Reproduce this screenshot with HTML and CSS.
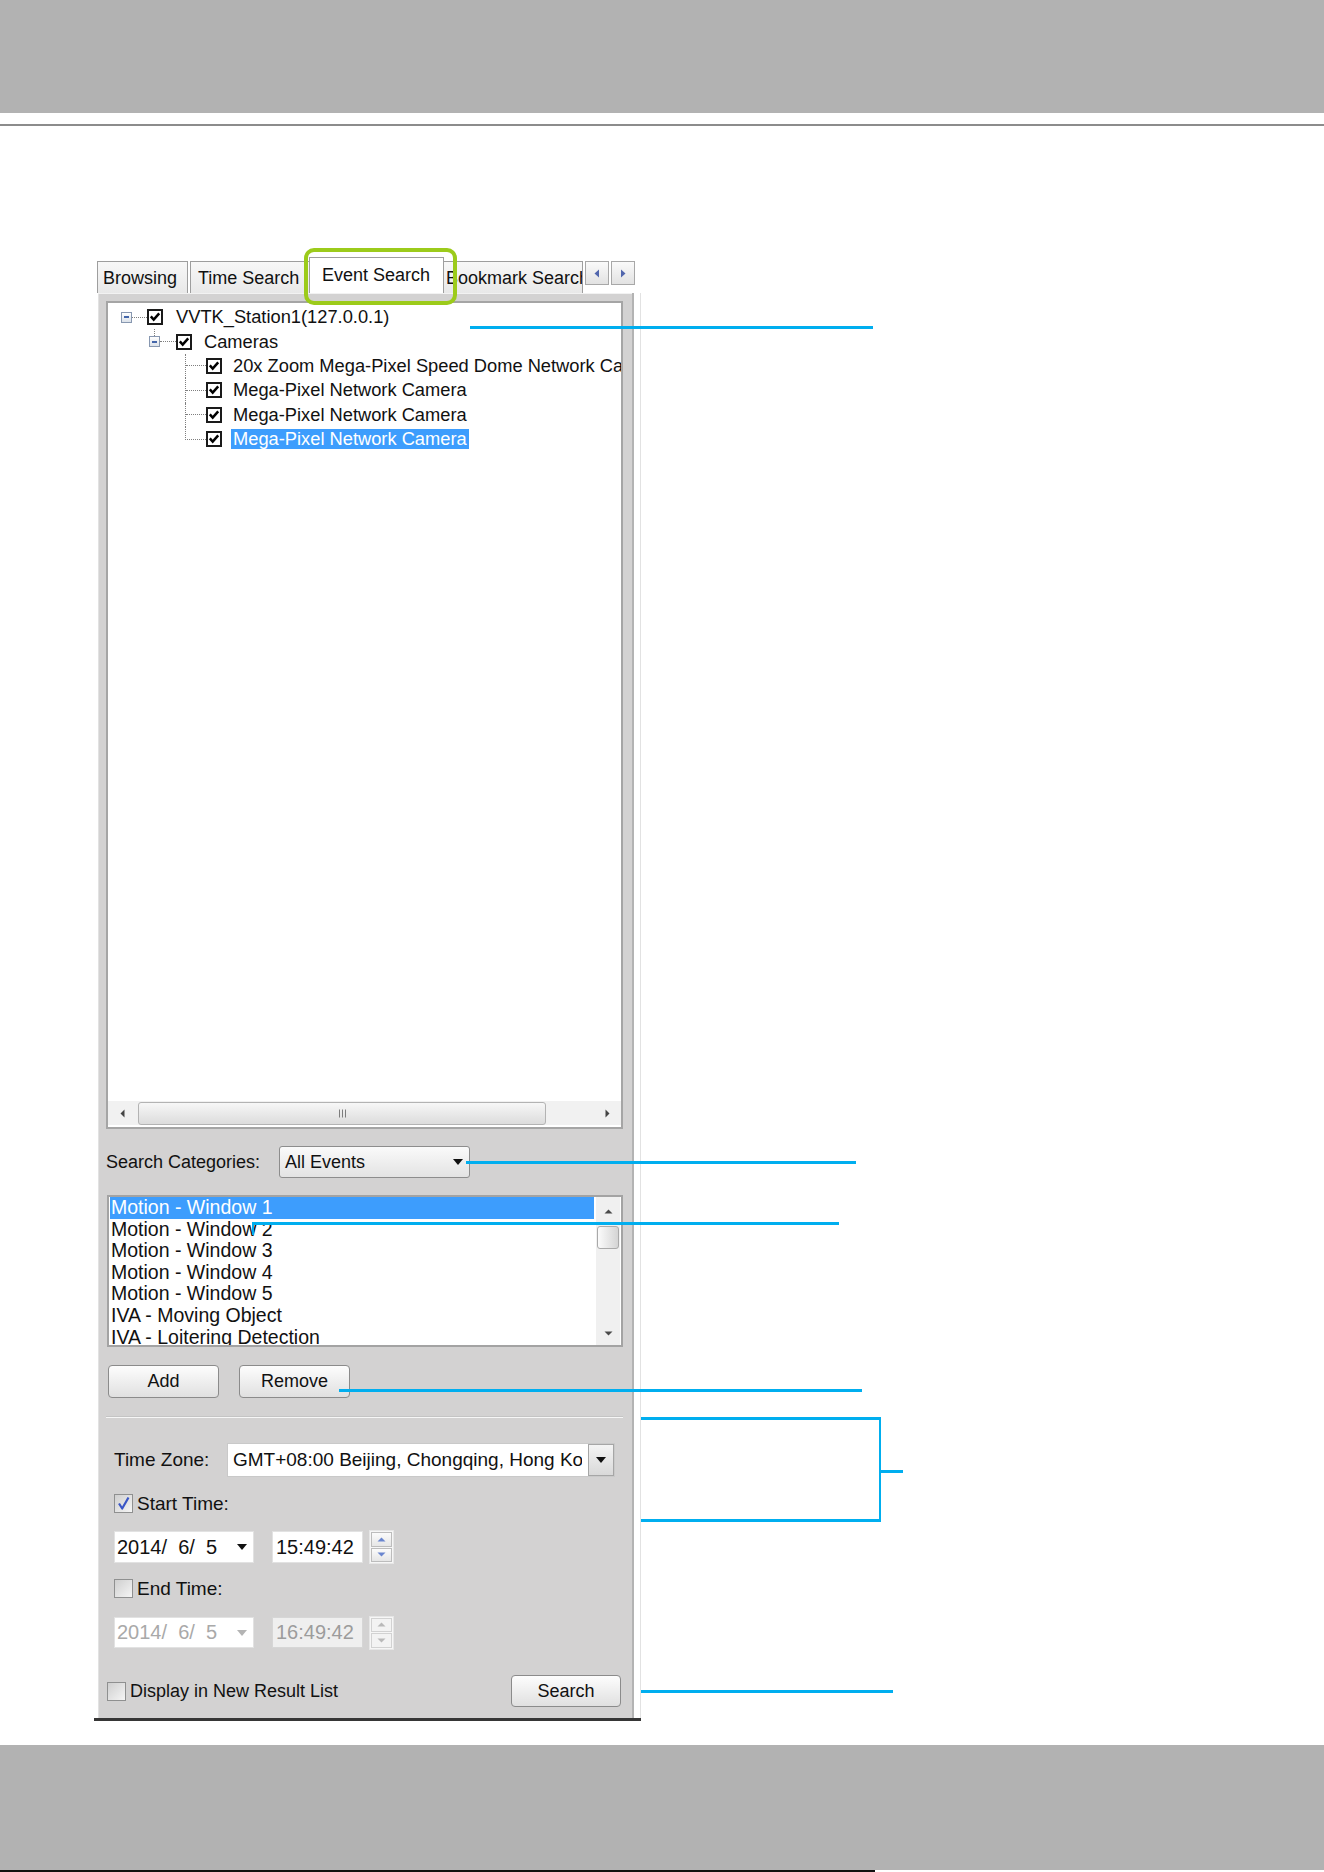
FILE: index.html
```html
<!DOCTYPE html>
<html lang="en">
<head>
<meta charset="utf-8">
<title>Event Search</title>
<link rel="stylesheet" href="styles.css">
</head>
<body>
<div class="page-head"></div>
<div class="page-rule"></div>

<main class="stage">
  <section class="panel">
    <div class="tabstrip">
      <div class="tab tab-browse">Browsing</div>
      <div class="tab tab-time">Time Search</div>
      <div class="tab tab-active">Event Search</div>
      <div class="tab tab-bookmark"><span>Bookmark Search</span></div>
      <div class="tab-nav">
        <div class="nav-btn"><svg width="6" height="9" viewBox="0 0 6 9"><path d="M5 0.5 L0.5 4.5 L5 8.5 Z" fill="#5166ad"/></svg></div>
        <div class="nav-btn"><svg width="6" height="9" viewBox="0 0 6 9"><path d="M1 0.5 L5.5 4.5 L1 8.5 Z" fill="#5166ad"/></svg></div>
      </div>
    </div>

    <div class="frame">
      <div class="body">
        <!-- device tree -->
        <div class="tree">
          <div class="tree-view">
            <div class="node lvl0">
              <div class="node-col"><span class="stub"></span><span class="exp"><i></i></span><span class="stub"></span></div>
              <span class="hdots"></span>
              <svg class="tcb" width="16" height="16" viewBox="0 0 16 16"><rect x="1" y="1" width="14" height="14" fill="#fff" stroke="#1a1a1a" stroke-width="2"/><path d="M3.8 7.4 L6.7 10.6 L12.2 4.4" fill="none" stroke="#000" stroke-width="2.5"/></svg>
              <span class="node-label">VVTK_Station1(127.0.0.1)</span>
            </div>
            <div class="node lvl1">
              <div class="node-col"><span class="stub up"></span><span class="exp"><i></i></span><span class="stub"></span></div>
              <span class="hdots"></span>
              <svg class="tcb" width="16" height="16" viewBox="0 0 16 16"><rect x="1" y="1" width="14" height="14" fill="#fff" stroke="#1a1a1a" stroke-width="2"/><path d="M3.8 7.4 L6.7 10.6 L12.2 4.4" fill="none" stroke="#000" stroke-width="2.5"/></svg>
              <span class="node-label">Cameras</span>
            </div>
            <div class="node lvl2">
              <span class="branch"></span>
              <svg class="tcb" width="16" height="16" viewBox="0 0 16 16"><rect x="1" y="1" width="14" height="14" fill="#fff" stroke="#1a1a1a" stroke-width="2"/><path d="M3.8 7.4 L6.7 10.6 L12.2 4.4" fill="none" stroke="#000" stroke-width="2.5"/></svg>
              <span class="node-label">20x Zoom Mega-Pixel Speed Dome Network Camera</span>
            </div>
            <div class="node lvl2">
              <span class="branch"></span>
              <svg class="tcb" width="16" height="16" viewBox="0 0 16 16"><rect x="1" y="1" width="14" height="14" fill="#fff" stroke="#1a1a1a" stroke-width="2"/><path d="M3.8 7.4 L6.7 10.6 L12.2 4.4" fill="none" stroke="#000" stroke-width="2.5"/></svg>
              <span class="node-label">Mega-Pixel Network Camera</span>
            </div>
            <div class="node lvl2">
              <span class="branch"></span>
              <svg class="tcb" width="16" height="16" viewBox="0 0 16 16"><rect x="1" y="1" width="14" height="14" fill="#fff" stroke="#1a1a1a" stroke-width="2"/><path d="M3.8 7.4 L6.7 10.6 L12.2 4.4" fill="none" stroke="#000" stroke-width="2.5"/></svg>
              <span class="node-label">Mega-Pixel Network Camera</span>
            </div>
            <div class="node lvl2">
              <span class="branch end"></span>
              <svg class="tcb" width="16" height="16" viewBox="0 0 16 16"><rect x="1" y="1" width="14" height="14" fill="#fff" stroke="#1a1a1a" stroke-width="2"/><path d="M3.8 7.4 L6.7 10.6 L12.2 4.4" fill="none" stroke="#000" stroke-width="2.5"/></svg>
              <span class="node-label selected">Mega-Pixel Network Camera</span>
            </div>
          </div>
          <div class="hscroll">
            <div class="sb-arrow h-left"><svg width="5" height="9" viewBox="0 0 5 9"><path d="M4.5 0.5 L0.5 4.5 L4.5 8.5 Z" fill="#444"/></svg></div>
            <div class="h-thumb"><svg width="9" height="9" viewBox="0 0 9 9"><path d="M1.5 0.5V8.5M4.5 0.5V8.5M7.5 0.5V8.5" stroke="#7d7d7d" stroke-width="1"/></svg></div>
            <div class="sb-fill"></div>
            <div class="sb-arrow h-right"><svg width="5" height="9" viewBox="0 0 5 9"><path d="M0.5 0.5 L4.5 4.5 L0.5 8.5 Z" fill="#444"/></svg></div>
          </div>
        </div>

        <!-- category picker -->
        <div class="cat-row">
          <span class="cat-label">Search Categories:</span>
          <div class="select">
            <span>All Events</span>
            <svg width="10" height="6" viewBox="0 0 10 6"><path d="M0 0H10L5 6Z" fill="#111"/></svg>
          </div>
        </div>

        <div class="list">
          <div class="list-items">
            <div class="li sel">Motion - Window 1</div>
            <div class="li">Motion - Window 2</div>
            <div class="li">Motion - Window 3</div>
            <div class="li">Motion - Window 4</div>
            <div class="li">Motion - Window 5</div>
            <div class="li">IVA - Moving Object</div>
            <div class="li">IVA - Loitering Detection</div>
          </div>
          <div class="vscroll">
            <div class="sb-arrow v-up"><svg width="9" height="5" viewBox="0 0 9 5"><path d="M0.5 4.5H8.5L4.5 0.5Z" fill="#4a4a4a"/></svg></div>
            <div class="v-thumb"></div>
            <div class="sb-fill"></div>
            <div class="sb-arrow v-down"><svg width="9" height="5" viewBox="0 0 9 5"><path d="M0.5 0.5H8.5L4.5 4.5Z" fill="#4a4a4a"/></svg></div>
          </div>
        </div>

        <div class="btn-row">
          <div class="btn">Add</div>
          <div class="btn">Remove</div>
        </div>

        <div class="sep"></div>

        <!-- time range -->
        <div class="tz-row">
          <span class="tz-label">Time Zone:</span>
          <div class="combo">
            <span class="combo-text">GMT+08:00 Beijing, Chongqing, Hong Kong, Urumqi</span>
            <div class="combo-btn"><svg width="10" height="6" viewBox="0 0 10 6"><path d="M0 0H10L5 6Z" fill="#111"/></svg></div>
          </div>
        </div>

        <div class="check-row start-check">
          <span class="chk"><svg width="17" height="17" viewBox="0 0 17 17"><path d="M4 8.5 L7.2 13.5 L13.5 2.5" fill="none" stroke="#3a56c6" stroke-width="2.2" stroke-linejoin="round"/></svg></span>
          <span class="chk-label">Start Time:</span>
        </div>

        <div class="dt-row start-dt">
          <div class="date"><span>2014/  6/  5</span><svg width="10" height="6" viewBox="0 0 10 6"><path d="M0 0H10L5 6Z" fill="#111"/></svg></div>
          <div class="time">15:49:42</div>
          <div class="spin">
            <div class="spin-btn"><svg width="9" height="5" viewBox="0 0 9 5"><path d="M0.5 4.5H8.5L4.5 0.5Z" fill="#6a86cf"/></svg></div>
            <div class="spin-btn"><svg width="9" height="5" viewBox="0 0 9 5"><path d="M0.5 0.5H8.5L4.5 4.5Z" fill="#6a86cf"/></svg></div>
          </div>
        </div>

        <div class="check-row end-check">
          <span class="chk"></span>
          <span class="chk-label">End Time:</span>
        </div>

        <div class="dt-row end-dt">
          <div class="date off"><span>2014/  6/  5</span><svg width="10" height="6" viewBox="0 0 10 6"><path d="M0 0H10L5 6Z" fill="#b4b4b4"/></svg></div>
          <div class="time off">16:49:42</div>
          <div class="spin off">
            <div class="spin-btn"><svg width="9" height="5" viewBox="0 0 9 5"><path d="M0.5 4.5H8.5L4.5 0.5Z" fill="#b9b9b9"/></svg></div>
            <div class="spin-btn"><svg width="9" height="5" viewBox="0 0 9 5"><path d="M0.5 0.5H8.5L4.5 4.5Z" fill="#b9b9b9"/></svg></div>
          </div>
        </div>

        <div class="bottom-row">
          <span class="chk"></span>
          <span class="chk-label">Display in New Result List</span>
          <div class="btn search-btn">Search</div>
        </div>
      </div>
      <div class="edge"></div>
    </div>
    <div class="panel-base"></div>
  </section>

  <!-- callout lines drawn over the screenshot -->
  <div class="focus-ring"></div>
  <div class="mk mk-tree"></div>
  <div class="mk mk-cat"></div>
  <div class="mk mk-list"></div>
  <div class="mk mk-list-tick"></div>
  <div class="mk mk-remove"></div>
  <div class="mk mk-brace-top"></div>
  <div class="mk mk-brace-side"></div>
  <div class="mk mk-brace-bot"></div>
  <div class="mk mk-brace-tick"></div>
  <div class="mk mk-search"></div>
</main>

<div class="page-foot"></div>
<div class="foot-line"></div>
</body>
</html>
```

FILE: styles.css
```css
* { box-sizing: border-box; }

html, body { margin: 0; padding: 0; }

body {
  width: 1324px;
  height: 1872px;
  overflow: hidden;
  background: #fff;
  font-family: "Liberation Sans", Arial, sans-serif;
  font-size: 18px;
  color: #111;
}

/* page chrome */
.page-head { height: 113px; background: #b2b2b2; }
.page-rule { margin-top: 11px; height: 2px; background: #8c8c8c; }
.stage { position: relative; height: 1619px; padding-top: 131px; }
.page-foot { height: 125px; background: #b2b2b2; }
.foot-line { width: 875px; height: 2px; background: #111; }

/* panel */
.panel { margin-left: 95px; width: 546px; }

.tabstrip {
  display: flex;
  align-items: flex-end;
  height: 36px;
  padding-left: 2px;
}

.tab {
  flex: none;
  height: 32px;
  border: 1px solid #9e9e9e;
  border-bottom: none;
  background: linear-gradient(#f8f8f8, #e8e8e8);
  display: flex;
  align-items: center;
  white-space: nowrap;
  overflow: hidden;
  line-height: 1;
}
.tab-browse { width: 91px; padding-left: 5px; }
.tab-time { width: 123px; margin-left: 2px; padding-left: 7px; }
.tab-active {
  position: relative;
  z-index: 1;
  width: 135px;
  height: 36px;
  margin-left: -4px;
  padding-left: 12px;
  padding-bottom: 2px;
  background: #fff;
}
.tab-bookmark { width: 141px; margin-left: -2px; }
.tab-bookmark span { margin-left: 3px; }

.tab-nav {
  align-self: flex-start;
  margin-top: 4px;
  margin-left: 2px;
  display: flex;
  gap: 2px;
}
.nav-btn {
  width: 24px;
  height: 24px;
  border: 1px solid #a8a8a8;
  background: linear-gradient(#fafafa, #e2e2e2);
  display: flex;
  align-items: center;
  justify-content: center;
}

.frame { display: flex; margin-left: 3px; }

.body {
  width: 534px;
  background: #d3d2d2;
  box-shadow: inset 0 1px #f2f2f2, inset 1px 0 #e2e2e2;
  padding: 8px 9px 11px 8px;
  display: flex;
  flex-direction: column;
}

.edge {
  width: 9px;
  border-left: 2px solid #b3b3b3;
  border-right: 1px solid #e2e2e2;
  background: #fff;
}

.panel-base {
  width: 547px;
  height: 3px;
  margin-left: -1px;
  background: #363636;
}

/* tree */
.tree {
  height: 828px;
  border: 2px solid #a5a5a5;
  background: #fff;
  display: flex;
  flex-direction: column;
}
.tree-view {
  flex: 1;
  overflow: hidden;
  padding-top: 2px;
}
.node {
  height: 24.4px;
  display: flex;
  align-items: center;
  white-space: nowrap;
}
.node > * { flex-shrink: 0; }
.lvl0 { padding-left: 13px; }
.lvl1 { padding-left: 41px; }
.lvl2 { padding-left: 77px; }

.node-col {
  width: 11px;
  align-self: stretch;
  display: flex;
  flex-direction: column;
  align-items: center;
}
.stub { flex: 1; width: 0; }
.stub.up { border-left: 1px dotted #7f7f7f; }

.exp {
  width: 11px;
  height: 11px;
  border: 1px solid #8797b0;
  background: linear-gradient(#ffffff, #dce2ea);
  display: flex;
  align-items: center;
  justify-content: center;
}
.exp i { width: 5px; height: 2px; background: #4466aa; }

.hdots { height: 0; border-top: 1px dotted #7f7f7f; }
.lvl0 .hdots { width: 15px; }
.lvl1 .hdots { width: 16px; }

.branch {
  width: 21px;
  align-self: stretch;
  border-left: 1px dotted #7f7f7f;
  display: flex;
  align-items: center;
}
.branch::after {
  content: "";
  flex: 1;
  border-top: 1px dotted #7f7f7f;
}
.branch.end {
  align-self: flex-start;
  height: 12.7px;
  border-bottom: 1px dotted #7f7f7f;
}
.branch.end::after { display: none; }

.tcb { display: block; }

.node-label {
  height: 20px;
  line-height: 20px;
  padding: 0 2px;
  font-size: 18.3px;
}
.lvl0 .node-label { margin-left: 11px; }
.lvl1 .node-label { margin-left: 10px; }
.lvl2 .node-label { margin-left: 9px; }
.node-label.selected { background: #3d9dfd; color: #fff; }

/* scrollbars */
.hscroll {
  height: 24px;
  margin-bottom: 2px;
  background: #f1f1f1;
  display: flex;
  align-items: center;
}
.sb-arrow { display: flex; align-items: center; justify-content: center; }
.h-left { width: 28px; height: 24px; }
.h-right { width: 27px; height: 24px; }
.sb-fill { flex: 1; }
.h-thumb {
  width: 408px;
  height: 23px;
  margin-left: 2px;
  border: 1px solid #b3b3b3;
  border-radius: 3px;
  background: linear-gradient(#f7f7f7, #dcdcdc);
  display: flex;
  align-items: center;
  justify-content: center;
}

/* categories */
.cat-row {
  margin-top: 17px;
  height: 32px;
  display: flex;
  align-items: center;
}
.cat-label { width: 173px; }
.select {
  width: 191px;
  height: 32px;
  border: 1px solid #8d8d8d;
  border-radius: 3px;
  background: linear-gradient(#fafafa, #e3e3e3);
  display: flex;
  align-items: center;
  justify-content: space-between;
  padding: 0 6px 0 5px;
}

.list {
  margin-top: 17px;
  margin-left: 1px;
  height: 152px;
  border: 2px solid #a3a3a3;
  background: #fff;
  display: flex;
}
.list-items {
  width: 486px;
  padding: 0 1px;
  overflow: hidden;
}
.li {
  height: 21.6px;
  line-height: 21.6px;
  padding-left: 1px;
  white-space: nowrap;
  font-size: 19.5px;
}
.li.sel { background: #3d9dfd; color: #fff; }

.vscroll {
  width: 24px;
  margin-left: 1px;
  margin-right: 1px;
  background: #f0f0f0;
  display: flex;
  flex-direction: column;
}
.v-up { height: 28px; }
.v-down { height: 24px; }
.v-thumb {
  height: 23px;
  margin: 1px 1px 0;
  border: 1px solid #a9a9a9;
  border-radius: 3px;
  background: linear-gradient(90deg, #fbfbfb, #d4d4d4);
}

/* buttons */
.btn-row {
  margin-top: 18px;
  height: 33px;
  display: flex;
  gap: 20px;
  padding-left: 2px;
}
.btn {
  width: 111px;
  height: 33px;
  border: 1px solid #8b8b8b;
  border-radius: 4px;
  background: linear-gradient(#fdfdfd, #e0e0e0);
  display: flex;
  align-items: center;
  justify-content: center;
}

.sep {
  margin-top: 18px;
  height: 2px;
  border-top: 1px solid #c4c4c4;
  border-bottom: 1px solid #f6f6f6;
}

/* time zone and range */
.tz-row {
  margin-top: 25px;
  height: 34px;
  display: flex;
  align-items: center;
  padding-left: 8px;
  font-size: 19px;
}
.tz-label { width: 113px; }
.combo {
  width: 388px;
  height: 34px;
  border: 1px solid #c9c9c9;
  background: #fff;
  display: flex;
}
.combo-text {
  flex: 1;
  margin-right: 6px;
  padding-left: 5px;
  overflow: hidden;
  white-space: nowrap;
  display: flex;
  align-items: center;
}
.combo-btn {
  width: 26px;
  border: 1px solid #a6a6a6;
  background: linear-gradient(#f4f4f4, #d9d9d9);
  display: flex;
  align-items: center;
  justify-content: center;
}

.check-row {
  height: 19px;
  display: flex;
  align-items: center;
  padding-left: 8px;
  font-size: 19px;
}
.start-check { margin-top: 17px; }
.end-check { margin-top: 16px; }

.chk {
  width: 19px;
  height: 19px;
  flex: none;
  border: 1px solid #8f9090;
  background: linear-gradient(135deg, #cfcfcf, #f5f5f5);
  display: flex;
  align-items: center;
  justify-content: center;
}
.chk-label { margin-left: 4px; white-space: nowrap; }

.dt-row {
  display: flex;
  align-items: center;
  padding-left: 8px;
  font-size: 20px;
}
.start-dt { margin-top: 18px; height: 32px; }
.end-dt { margin-top: 19px; height: 31px; }

.date {
  width: 140px;
  height: 100%;
  background: #fff;
  border: 1px solid #e2e2e2;
  display: flex;
  align-items: center;
  justify-content: space-between;
  padding: 0 6px 0 2px;
  white-space: pre;
}
.time {
  width: 91px;
  height: 100%;
  margin-left: 18px;
  background: #fff;
  border: 1px solid #e2e2e2;
  display: flex;
  align-items: center;
  padding-left: 3px;
}
.spin {
  width: 25px;
  height: 34px;
  margin-left: 6px;
  padding: 1px;
  border: 1px solid #e6e6e6;
  background: #f6f6f6;
  display: flex;
  flex-direction: column;
  gap: 1px;
}
.spin-btn {
  flex: 1;
  border: 1px solid #bcbcbc;
  background: linear-gradient(#fbfbfb, #e6e6e6);
  display: flex;
  align-items: center;
  justify-content: center;
}

.date.off { color: #a9a9a9; }
.time.off { color: #9c9c9c; background: #efefef; border-color: #d6d6d6; }
.spin.off .spin-btn { border-color: #d2d2d2; background: #f3f3f3; }

.bottom-row {
  margin-top: 27px;
  height: 32px;
  display: flex;
  align-items: center;
  padding-left: 1px;
}
.search-btn {
  width: 110px;
  height: 32px;
  margin-left: auto;
  margin-right: 2px;
}

/* callouts */
.focus-ring {
  position: absolute;
  left: 304px;
  top: 122px;
  width: 153px;
  height: 57px;
  border: 4px solid #9ccb1b;
  border-radius: 10px;
  z-index: 2;
}
.mk {
  position: absolute;
  height: 3px;
  background: #00aeef;
  z-index: 2;
}
.mk-tree { left: 470px; top: 200px; width: 403px; }
.mk-cat { left: 466px; top: 1035px; width: 390px; }
.mk-list { left: 252px; top: 1096px; width: 587px; }
.mk-list-tick { left: 252px; top: 1096px; width: 2px; height: 13px; }
.mk-remove { left: 339px; top: 1263px; width: 523px; }
.mk-brace-top { left: 641px; top: 1291px; width: 240px; }
.mk-brace-side { left: 879px; top: 1291px; width: 2px; height: 105px; }
.mk-brace-bot { left: 641px; top: 1393px; width: 240px; }
.mk-brace-tick { left: 881px; top: 1344px; width: 22px; }
.mk-search { left: 641px; top: 1564px; width: 252px; }
```
